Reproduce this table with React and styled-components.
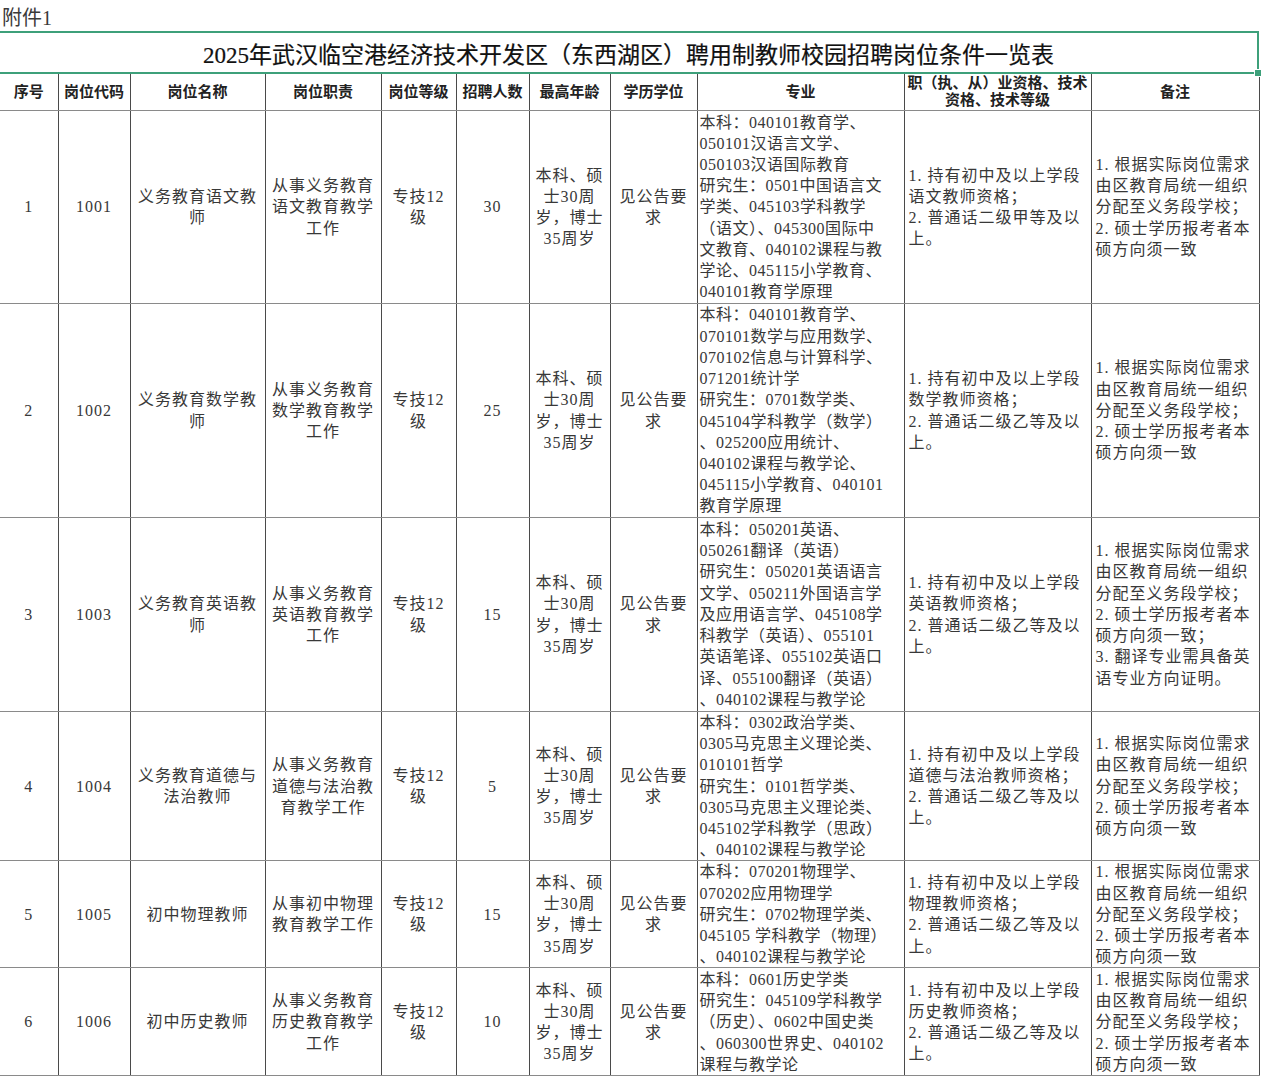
import styled, { createGlobalStyle } from "styled-components"

const GlobalStyle = createGlobalStyle`
    html, body {
        margin: 0;
        padding: 0;
        background: #fff;
    }
    body {
        font-family: "Liberation Serif", "Noto Sans CJK SC", serif;
        color: #333;
    }
`

const Page = styled.div`
    width: 1264px;
    display: flex;
    flex-direction: column;
`

const Attachment = styled.div`
    height: 31px;
    line-height: 36px;
    padding-left: 2px;
    font-size: 20px;
    color: #3a3a3a;
    white-space: nowrap;
`

const TitleBox = styled.div`
    position: relative;
    width: 1257px;
    height: 39px;
    border-top: 2px solid #3da07a;
    border-bottom: 2px solid #3da07a;
    border-right: 2px solid #3da07a;
    display: flex;
    align-items: center;
    justify-content: center;
    font-size: 23px;
    color: #111;
    -webkit-text-stroke: 0.2px #111;
    white-space: nowrap;
`

const Handle = styled.span`
    position: absolute;
    right: -5px;
    bottom: -5px;
    width: 6px;
    height: 6px;
    background: #3da07a;
    border: 1px solid #fff;
`

const Table = styled.table`
    width: 1259px;
    table-layout: fixed;
    border-collapse: collapse;
`

const HeadCell = styled.th`
    height: 36px;
    padding: 0;
    font-size: 15px;
    line-height: 17px;
    font-weight: 700;
    color: #222;
    text-align: center;
    vertical-align: middle;
    border-right: 1px solid #4a4a4a;
    border-bottom: 1px solid #8a8a8a;
    white-space: nowrap;
`

const Cell = styled.td`
    padding: 0 0 0 ${p => p.$pad || 0}px;
    font-size: 16px;
    line-height: 21.2px;
    letter-spacing: ${p => p.$spacing ?? 1}px;
    color: #383838;
    text-align: ${p => p.$align || "center"};
    vertical-align: middle;
    border-right: 1px solid #4a4a4a;
    border-bottom: 1px solid #8a8a8a;
    overflow: hidden;
`

const Line = styled.div`
    white-space: nowrap;
`

const cols = [58, 72, 135, 116, 75, 73, 81, 87, 207, 187, 168]

const headers = [
    ["序号"], ["岗位代码"], ["岗位名称"], ["岗位职责"], ["岗位等级"], ["招聘人数"],
    ["最高年龄"], ["学历学位"], ["专业"], ["职（执、从）业资格、技术", "资格、技术等级"], ["备注"],
]

const age = ["本科、硕", "士30周", "岁，博士", "35周岁"]
const edu = ["见公告要", "求"]
const level = ["专技12", "级"]
const note = ["1. 根据实际岗位需求", "由区教育局统一组织", "分配至义务段学校；", "2. 硕士学历报考者本", "硕方向须一致"]
const qual = (subject, grade = "乙") => [
    "1. 持有初中及以上学段", `${subject}教师资格；`, `2. 普通话二级${grade}等及以`, "上。",
]

const rows = [
    {
        no: "1", code: "1001", height: 193,
        name: ["义务教育语文教", "师"],
        duty: ["从事义务教育", "语文教育教学", "工作"],
        count: "30",
        major: ["本科：040101教育学、", "050101汉语言文学、", "050103汉语国际教育", "研究生：0501中国语言文", "学类、045103学科教学", "（语文）、045300国际中", "文教育、040102课程与教", "学论、045115小学教育、", "040101教育学原理"],
        qual: qual("语文", "甲"),
        note,
    },
    {
        no: "2", code: "1002", height: 214,
        name: ["义务教育数学教", "师"],
        duty: ["从事义务教育", "数学教育教学", "工作"],
        count: "25",
        major: ["本科：040101教育学、", "070101数学与应用数学、", "070102信息与计算科学、", "071201统计学", "研究生：0701数学类、", "045104学科教学（数学）", "、025200应用统计、", "040102课程与教学论、", "045115小学教育、040101", "教育学原理"],
        qual: qual("数学"),
        note,
    },
    {
        no: "3", code: "1003", height: 194,
        name: ["义务教育英语教", "师"],
        duty: ["从事义务教育", "英语教育教学", "工作"],
        count: "15",
        major: ["本科：050201英语、", "050261翻译（英语）", "研究生：050201英语语言", "文学、050211外国语言学", "及应用语言学、045108学", "科教学（英语）、055101", "英语笔译、055102英语口", "译、055100翻译（英语）", "、040102课程与教学论"],
        qual: qual("英语"),
        note: ["1. 根据实际岗位需求", "由区教育局统一组织", "分配至义务段学校；", "2. 硕士学历报考者本", "硕方向须一致；", "3. 翻译专业需具备英", "语专业方向证明。"],
    },
    {
        no: "4", code: "1004", height: 149,
        name: ["义务教育道德与", "法治教师"],
        duty: ["从事义务教育", "道德与法治教", "育教学工作"],
        count: "5",
        major: ["本科：0302政治学类、", "0305马克思主义理论类、", "010101哲学", "研究生：0101哲学类、", "0305马克思主义理论类、", "045102学科教学（思政）", "、040102课程与教学论"],
        qual: qual("道德与法治"),
        note,
    },
    {
        no: "5", code: "1005", height: 106,
        name: ["初中物理教师"],
        duty: ["从事初中物理", "教育教学工作"],
        count: "15",
        major: ["本科：070201物理学、", "070202应用物理学", "研究生：0702物理学类、", "045105 学科教学（物理）", "、040102课程与教学论"],
        qual: qual("物理"),
        note,
    },
    {
        no: "6", code: "1006", height: 108,
        name: ["初中历史教师"],
        duty: ["从事义务教育", "历史教育教学", "工作"],
        count: "10",
        major: ["本科：0601历史学类", "研究生：045109学科教学", "（历史）、0602中国史类", "、060300世界史、040102", "课程与教学论"],
        qual: qual("历史"),
        note,
    },
]

const Lines = ({ items }) => items.map((t, i) => <Line key={i}>{t}</Line>)

const App = () => {
    return (
        <Page>
            <GlobalStyle />
            <Attachment>附件1</Attachment>
            <TitleBox>
                2025年武汉临空港经济技术开发区（东西湖区）聘用制教师校园招聘岗位条件一览表
                <Handle />
            </TitleBox>
            <Table>
                <colgroup>
                    {cols.map((w, i) => <col key={i} style={{ width: w }} />)}
                </colgroup>
                <thead>
                    <tr>
                        {headers.map((h, i) => (
                            <HeadCell key={i}><Lines items={h} /></HeadCell>
                        ))}
                    </tr>
                </thead>
                <tbody>
                    {rows.map(r => (
                        <tr key={r.no} style={{ height: r.height }}>
                            <Cell>{r.no}</Cell>
                            <Cell>{r.code}</Cell>
                            <Cell><Lines items={r.name} /></Cell>
                            <Cell><Lines items={r.duty} /></Cell>
                            <Cell><Lines items={level} /></Cell>
                            <Cell>{r.count}</Cell>
                            <Cell><Lines items={age} /></Cell>
                            <Cell><Lines items={edu} /></Cell>
                            <Cell $align="left" $pad={2} $spacing={0.5}><Lines items={r.major} /></Cell>
                            <Cell $align="left" $pad={4} $spacing={1}><Lines items={r.qual} /></Cell>
                            <Cell $align="left" $pad={4} $spacing={1}><Lines items={r.note} /></Cell>
                        </tr>
                    ))}
                </tbody>
            </Table>
        </Page>
    )
}

export default App
